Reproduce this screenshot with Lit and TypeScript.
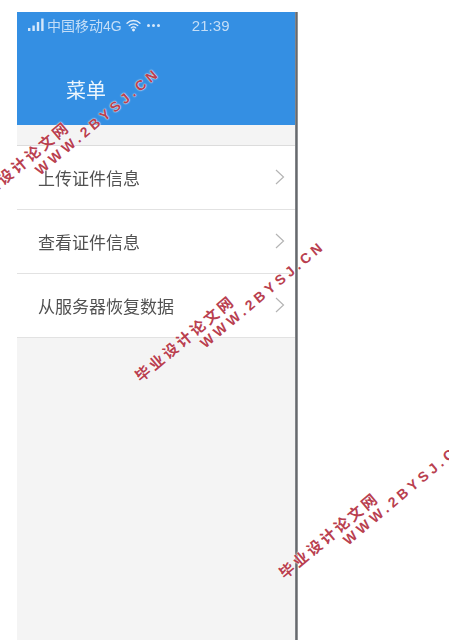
import { LitElement, html, css } from "lit";
import { customElement } from "lit/decorators.js";

const items = ["上传证件信息", "查看证件信息", "从服务器恢复数据"];
const marks = [
  { x: -28, y: 204, wx: 37, wy: 172 },
  { x: 137, y: 378, wx: 202, wy: 345 },
  { x: 281, y: 575, wx: 345, wy: 542 },
];

@customElement("app-root")
export class AppRoot extends LitElement {
  static styles = css`
    :host {
      display: block;
      position: relative;
      width: 449px;
      height: 640px;
      overflow: hidden;
      background: #fff;
      font-family: "Liberation Sans", "Noto Sans CJK SC", sans-serif;
    }
    .stage {
      display: flex;
      height: 640px;
      padding: 12px 0 0 17px;
      box-sizing: border-box;
    }
    .phone {
      width: 278px;
      display: flex;
      flex-direction: column;
      background: #f4f4f4;
      filter: blur(0.35px);
    }
    .edge {
      width: 3px;
      background: linear-gradient(90deg, #8d9094, #5f6266 60%, #b4b6b8);
    }
    .head {
      height: 113px;
      background: #348fe3;
      color: #fff;
      display: flex;
      flex-direction: column;
      box-sizing: border-box;
    }
    .status {
      display: flex;
      align-items: center;
      height: 26px;
      padding-left: 11px;
      font-size: 14px;
      color: #c4def7;
    }
    .carrier {
      margin-left: 2px;
      font-size: 14px;
    }
    .wifi {
      margin-left: 4px;
    }
    .dots {
      display: flex;
      gap: 2px;
      margin-left: 6px;
    }
    .dots i {
      width: 3px;
      height: 3px;
      border-radius: 50%;
      background: #d6e8fa;
    }
    .time {
      margin-left: 32px;
      font-size: 15px;
      letter-spacing: 0.1px;
    }
    .title {
      margin: 38px 0 0 49px;
      font-size: 20px;
      line-height: 28px;
      color: #eef6fd;
      font-family: "Noto Sans CJK SC", sans-serif;
    }
    .list {
      margin-top: 20px;
      background: #fff;
      border-top: 1px solid #dcdcdc;
    }
    .row {
      height: 63px;
      border-bottom: 1px solid #e2e2e2;
      display: flex;
      align-items: center;
      justify-content: space-between;
      padding: 0 10px 0 21px;
      font-family: "Noto Sans CJK SC", sans-serif;
      font-size: 17px;
      color: #515151;
    }
    .row svg {
      margin-bottom: 1px;
    }
    .mark {
      position: absolute;
      transform-origin: 0 50%;
      transform: rotate(-40deg);
      white-space: nowrap;
      color: #b9404f;
      font-weight: 700;
      text-shadow: 0 0 1px #fff, 0 0 2px #fff;
      line-height: 16px;
    }
    .cn {
      font-family: "Noto Sans CJK SC", sans-serif;
      font-size: 15px;
      letter-spacing: 2.8px;
    }
    .en {
      font-family: "Liberation Sans", sans-serif;
      font-size: 14px;
      letter-spacing: 3.9px;
    }
  `;

  render() {
    return html`
      <div class="stage">
        <div class="phone">
          <div class="head">
            <div class="status">
              <svg width="17" height="14" viewBox="0 0 17 14">
                <g fill="#d6e8fa">
                  <rect x="0" y="10" width="2.4" height="3" />
                  <rect x="4.4" y="7.5" width="2.4" height="5.5" />
                  <rect x="8.8" y="4" width="2.4" height="9" />
                  <rect x="13.2" y="0.5" width="2.4" height="12.5" />
                </g>
              </svg>
              <span class="carrier">中国移动4G</span>
              <svg class="wifi" width="15" height="13" viewBox="0 0 15 13" fill="none" stroke="#e4f0fb" stroke-width="1.3" stroke-linecap="round">
                <path d="M1 4.2a9.2 9.2 0 0 1 13 0" />
                <path d="M3.2 6.6a6 6 0 0 1 8.6 0" />
                <path d="M5.3 8.9a3 3 0 0 1 4.4 0" />
                <circle cx="7.5" cy="11" r="0.8" fill="#e4f0fb" />
              </svg>
              <span class="dots"><i></i><i></i><i></i></span>
              <span class="time">21:39</span>
            </div>
            <div class="title">菜单</div>
          </div>
          <div class="list">
            ${items.map(
              (t) => html`<div class="row">
                <span>${t}</span>
                <svg width="10" height="16" viewBox="0 0 10 16" fill="none" stroke="#b4b4b4" stroke-width="1.2">
                  <path d="M1 1l7.5 7L1 15" />
                </svg>
              </div>`
            )}
          </div>
        </div>
        <div class="edge"></div>
      </div>
      ${marks.map(
        (m) => html`
          <div class="mark cn" style="left:${m.x}px;top:${m.y - 8}px">毕业设计论文网</div>
          <div class="mark en" style="left:${m.wx}px;top:${m.wy - 8}px">WWW.2BYSJ.CN</div>
        `
      )}
    `;
  }
}
